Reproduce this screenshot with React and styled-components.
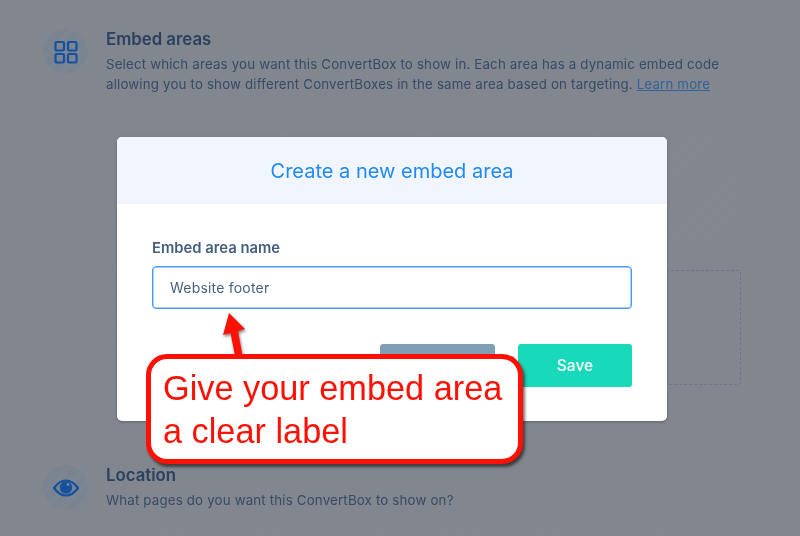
import React from 'react';
import styled, {createGlobalStyle} from 'styled-components';

const Global = createGlobalStyle`
  html, body {
    margin: 0;
    padding: 0;
    background: #82878f;
  }
  * {
    box-sizing: border-box;
  }
`;

const hatch = `repeating-linear-gradient(135deg, #80868e 0, #80868e 1px, #83888f 1px, #83888f 2px)`;

const Page = styled.div`
  position: relative;
  width: 800px;
  height: 536px;
  overflow: hidden;
  background: #82878f;
  font-family: Inter, 'Noto Sans', sans-serif;
  filter: blur(0.3px);
`;
const Content = styled.div`
  padding: 29px 59px 0 43px;
  display: flex;
  flex-direction: column;
`;
const Section = styled.section`
  display: flex;
  gap: 18px;
`;
const IconCircle = styled.div`
  flex: 0 0 45px;
  width: 45px;
  height: 45px;
  border-radius: 50%;
  background: repeating-linear-gradient(135deg, #78828f 0, #78828f 1px, #7f8795 1px, #7f8795 2px);
  color: #14519f;
  display: flex;
  align-items: center;
  justify-content: center;
`;
const SectionText = styled.div`
  flex: 1;
`;
const Title = styled.h3`
  margin: 0;
  font-size: 16.8px;
  line-height: 20px;
  font-weight: 600;
  color: #2a4160;
`;
const Description = styled.p`
  margin: 6px 0 0;
  font-size: 13.3px;
  line-height: 19.5px;
  letter-spacing: 0.17px;
  white-space: nowrap;
  color: #384a66;
`;
const LearnMore = styled.a`
  color: #34629b;
  text-decoration: underline;
`;
const Areas = styled.div`
  margin: 40px 0 80px 64px;
  display: grid;
  grid-template-columns: 310px 304px;
  grid-template-rows: 111px 115px;
  column-gap: 20px;
  row-gap: 25px;
`;
const AreaCard = styled.div`
  border-radius: 4px;
  background: ${hatch};
`;
const AddArea = styled.div`
  border-radius: 4px;
  border: 1.5px dashed #6f7681;
`;
const LocationCard = styled.div`
  margin: 15px 0 0 64px;
  height: 60px;
  border-radius: 4px;
  background: ${hatch};
`;

const Modal = styled.div`
  position: absolute;
  left: 117px;
  top: 137px;
  width: 550px;
  height: 284px;
  background: #fff;
  border-radius: 5px;
  overflow: hidden;
  box-shadow: 0 1px 3px rgba(50, 55, 65, 0.45);
`;
const ModalHeader = styled.div`
  height: 67px;
  background: #f0f5fe;
  display: flex;
  align-items: center;
  justify-content: center;
  font-size: 20px;
  color: #2389f5;
`;
const ModalBody = styled.div`
  padding: 35px 35px 0;
`;
const Label = styled.div`
  font-size: 14.8px;
  line-height: 18px;
  font-weight: 600;
  color: #44607f;
  margin-bottom: 9px;
`;
const NameInput = styled.div`
  height: 43px;
  border: 1px solid #4a9df5;
  box-shadow: inset 0 0 0 0.5px #4a9df5;
  border-radius: 4px;
  padding: 0 17px;
  display: flex;
  align-items: center;
  font-size: 14px;
  letter-spacing: 0.2px;
  color: #47627f;
`;
const Actions = styled.div`
  margin-top: 35px;
  display: flex;
  justify-content: flex-end;
  gap: 23px;
`;
const Button = styled.div`
  width: ${props => props.width}px;
  height: 43px;
  border-radius: 3px;
  background: ${props => props.bg};
  color: #fff;
  font-size: 15.5px;
  font-weight: 500;
  display: flex;
  align-items: center;
  justify-content: center;
`;

const Arrow = styled.svg`
  position: absolute;
  left: 215px;
  top: 308px;
  filter: drop-shadow(1.5px 2px 1.5px rgba(0, 0, 0, 0.5));
`;
const Callout = styled.div`
  position: absolute;
  left: 146px;
  top: 354px;
  width: 377px;
  height: 110px;
  padding: 8px 0 0 12px;
  background: #fff;
  border: 5px solid #fe1005;
  border-radius: 21px;
  box-shadow: 2px 3px 3px rgba(0, 0, 0, 0.55);
  font-family: 'Liberation Sans', Arial, sans-serif;
  font-size: 34.3px;
  line-height: 43px;
  color: #fe1005;
`;

const GridIcon = () => (
  <svg width="24" height="24" viewBox="0 0 24 24" fill="none" stroke="currentColor" strokeWidth="2.2">
    <rect x="1.5" y="2" width="8.5" height="8.5" rx="1.2" />
    <rect x="14" y="2" width="8.5" height="8.5" rx="1.2" />
    <rect x="1.5" y="14" width="8.5" height="8.5" rx="1.2" />
    <rect x="14" y="14" width="8.5" height="8.5" rx="1.2" />
  </svg>
);

const EyeIcon = () => (
  <svg width="26" height="18" viewBox="0 0 26 18">
    <path d="M1 9 C5 3.5 9 1.5 13 1.5 C17 1.5 21 3.5 25 9 C21 14.5 17 16.5 13 16.5 C9 16.5 5 14.5 1 9 Z" fill="none" stroke="currentColor" strokeWidth="2.2" />
    <circle cx="13" cy="8.5" r="6.2" fill="currentColor" />
    <circle cx="15" cy="5.5" r="1.5" fill="#77818f" />
  </svg>
);

export default function App() {
  return (
    <Page>
      <Global />
      <Content>
        <Section>
          <IconCircle><GridIcon /></IconCircle>
          <SectionText>
            <Title>Embed areas</Title>
            <Description>
              Select which areas you want this ConvertBox to show in. Each area has a dynamic embed code<br />
              allowing you to show different ConvertBoxes in the same area based on targeting. <LearnMore>Learn more</LearnMore>
            </Description>
          </SectionText>
        </Section>
        <Areas>
          <AreaCard />
          <AreaCard />
          <AreaCard />
          <AddArea />
        </Areas>
        <Section>
          <IconCircle><EyeIcon /></IconCircle>
          <SectionText>
            <Title>Location</Title>
            <Description>What pages do you want this ConvertBox to show on?</Description>
          </SectionText>
        </Section>
        <LocationCard />
      </Content>

      <Modal>
        <ModalHeader>Create a new embed area</ModalHeader>
        <ModalBody>
          <Label>Embed area name</Label>
          <NameInput>Website footer</NameInput>
          <Actions>
            <Button width={115} bg="#7f9fb5" />
            <Button width={114} bg="#19d9bb">Save</Button>
          </Actions>
        </ModalBody>
      </Modal>

      <Arrow width="36" height="50" viewBox="0 0 36 50">
        <path d="M14 5 L30 21 L23 23 L27.5 48 L20 48 L15.5 25 L8 27 Z" fill="#fe1005" />
      </Arrow>
      <Callout>
        Give your embed area<br />
        a clear label
      </Callout>
    </Page>
  );
}
